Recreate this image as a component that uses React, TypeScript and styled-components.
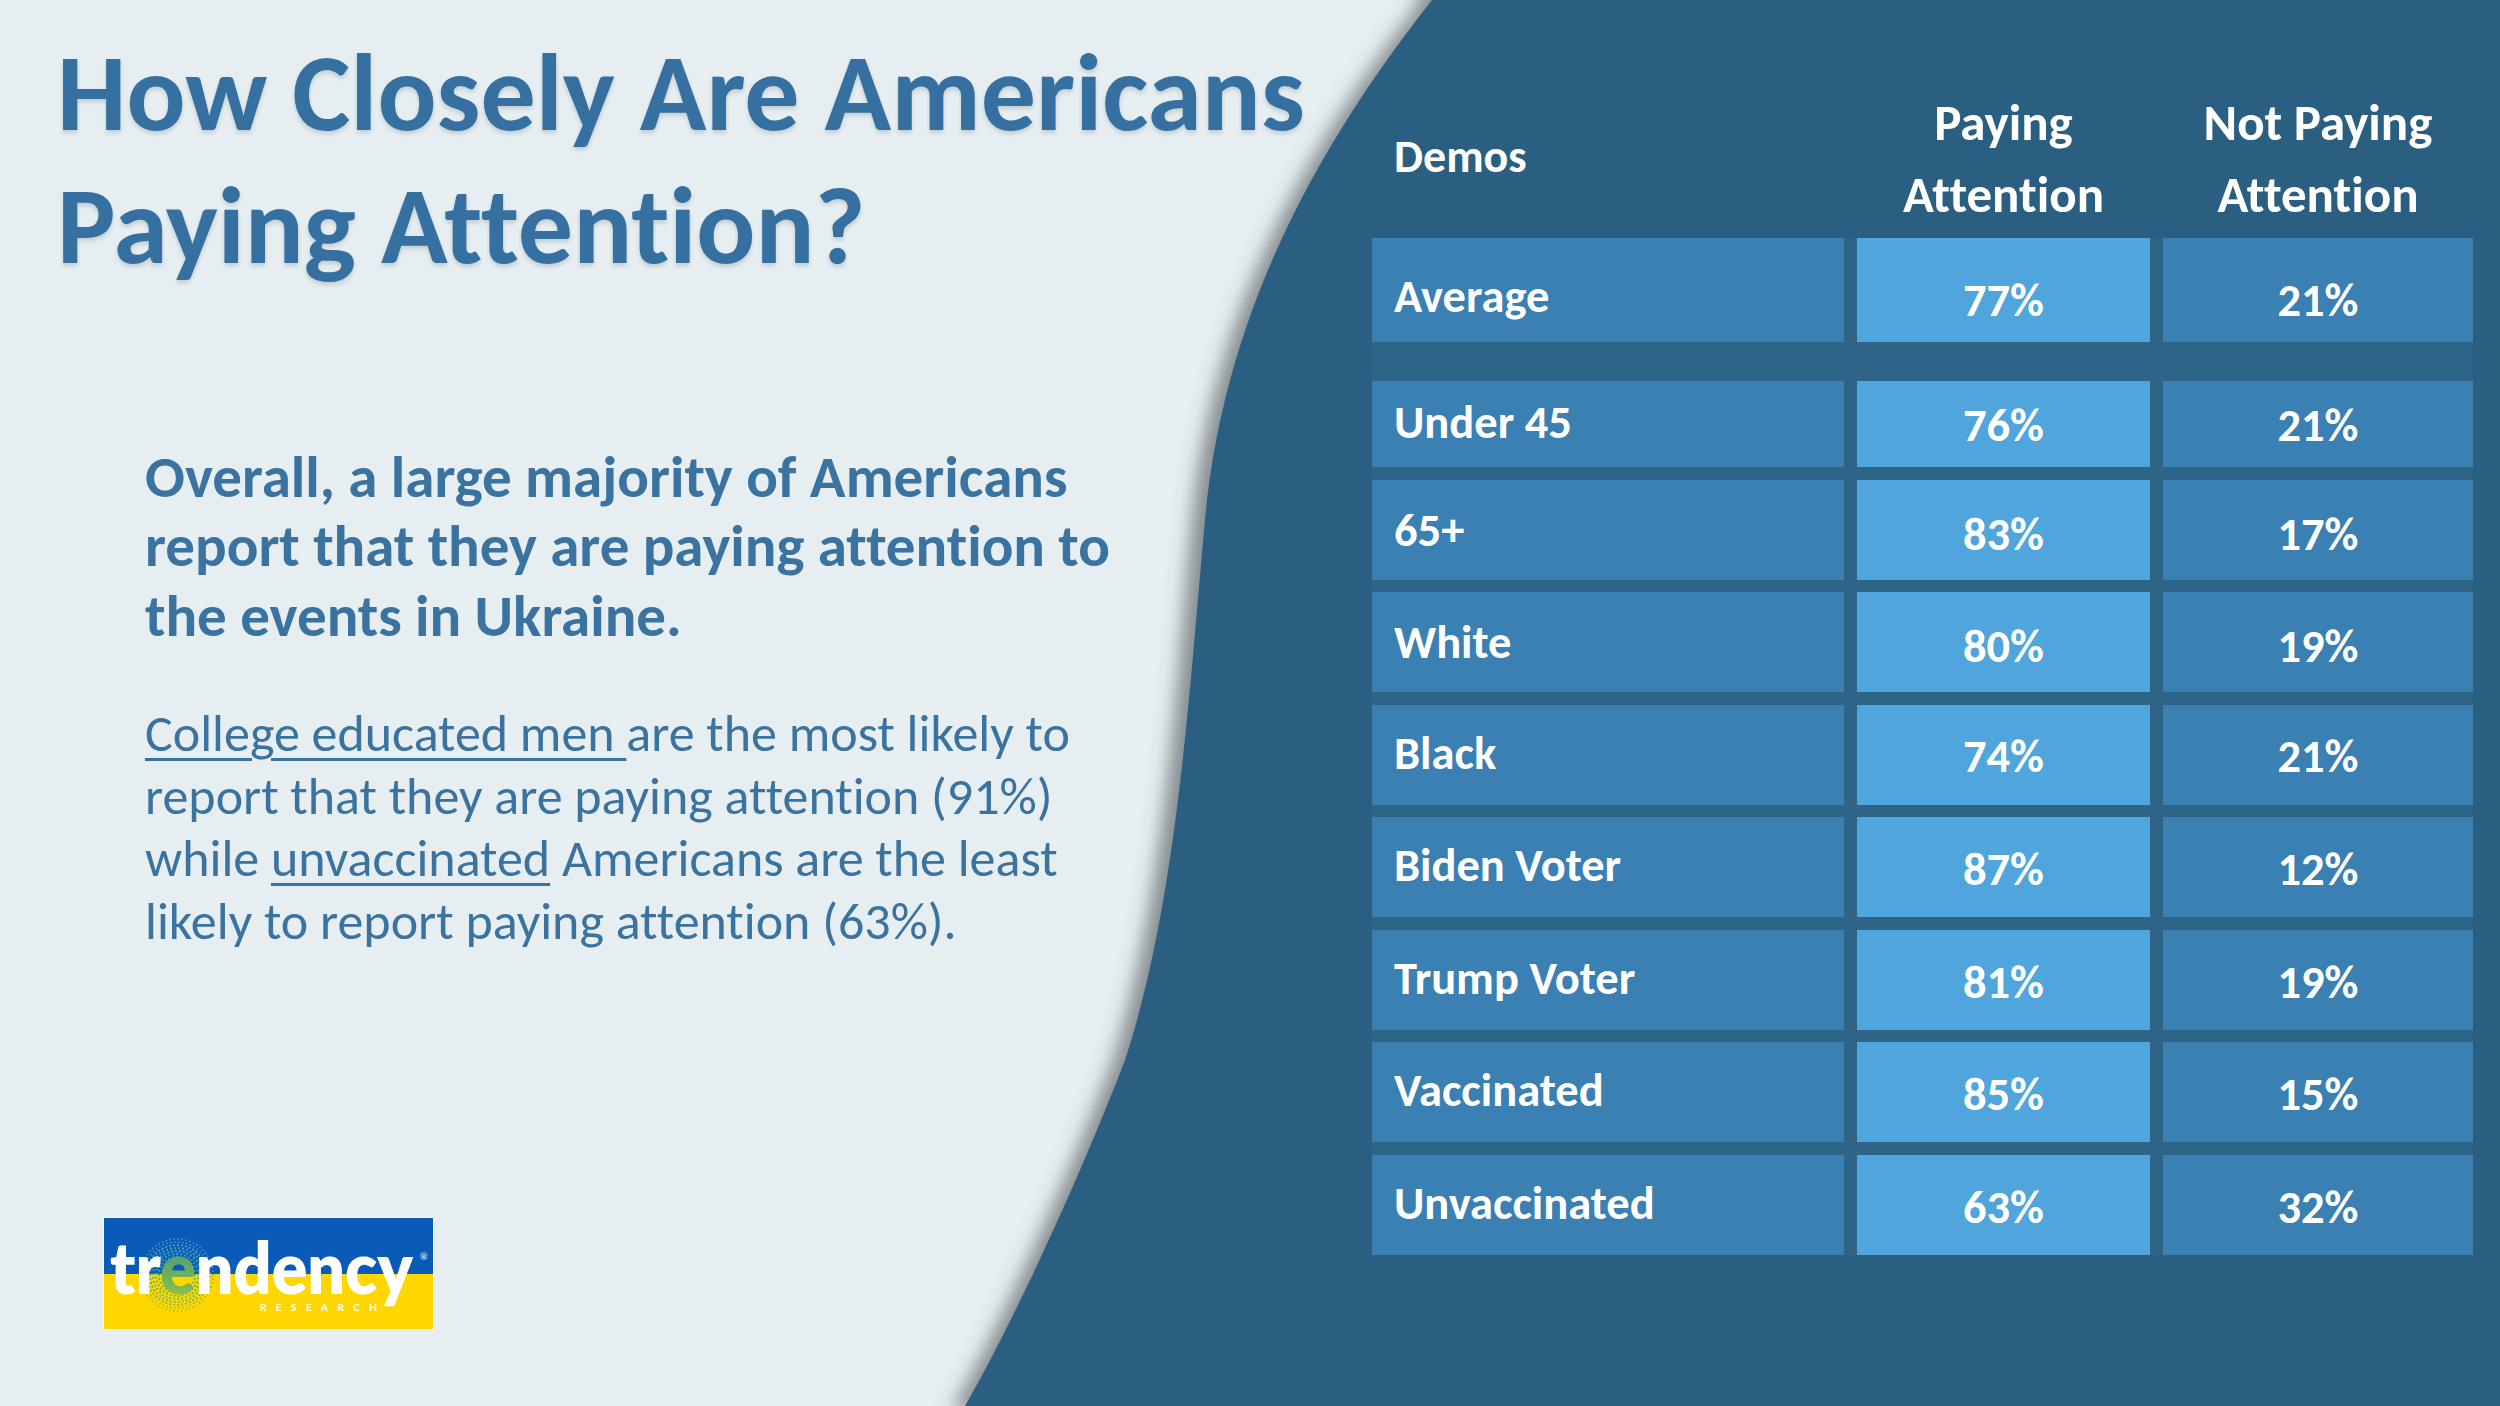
import React from "react";
import styled, { createGlobalStyle } from "styled-components";

const FONT = `"Carlito", "Calibri", "Lato", "Open Sans", sans-serif`;
const LOGO_FONT = `Lato, "Open Sans", sans-serif`;

const Global = createGlobalStyle`
  html, body { margin: 0; padding: 0; background: #e6eef1; }
  body { font-family: ${FONT}; }
`;

const Slide = styled.div`
  position: relative;
  width: 2500px;
  height: 1406px;
  overflow: hidden;
  background: #e6eef1;
  font-family: ${FONT};
  font-variant-ligatures: none;
  font-feature-settings: "liga" 0, "clig" 0;
`;

const Backdrop = styled.svg`
  position: absolute;
  inset: 0;
  width: 100%;
  height: 100%;
  z-index: 0;
`;

const Content = styled.div`
  position: relative;
  z-index: 1;
  display: grid;
  grid-template-columns: 1372px 1101px;
  height: 100%;
`;

const LeftColumn = styled.section`
  display: flex;
  flex-direction: column;
  padding: 26px 0 0 57px;
  min-width: 0;
`;

const Title = styled.h1`
  margin: 0;
  font-size: 110px;
  font-weight: 700;
  line-height: 133.3px;
  color: #3670a0;
  text-shadow: 0 3px 4px rgba(40, 60, 80, 0.18);
  white-space: nowrap;
`;

const Body = styled.div`
  margin: 150px 0 0 88px;
  color: #3a72a0;
  white-space: nowrap;
`;

const Lead = styled.p`
  margin: 0;
  font-size: 59px;
  font-weight: 700;
  line-height: 69.5px;
`;

const Detail = styled.p`
  margin: 51px 0 0;
  font-size: 52px;
  font-weight: 400;
  line-height: 62.5px;
`;

const Underlined = styled.span`
  text-decoration: underline;
  text-decoration-thickness: 3px;
  text-underline-offset: 7px;
`;

const LogoWrap = styled.div`
  margin: auto 0 77px 47px;
  width: 329px;
  height: 111px;
  box-shadow: 0 0 0 1px rgba(255, 255, 255, 0.6);
`;

const LogoSvg = styled.svg`
  display: block;
  overflow: visible;
`;

const RightColumn = styled.section`
  display: flex;
  flex-direction: column;
  padding-top: 60px;
`;

const COLS = "472px 293px 310px";

const HeaderRow = styled.div`
  display: grid;
  grid-template-columns: ${COLS};
  column-gap: 13px;
  height: 178px;
  padding-top: 22px;
  box-sizing: border-box;
`;

const HeadCell = styled.div<{ $align: "left" | "center" }>`
  display: flex;
  align-items: center;
  justify-content: ${(p) => (p.$align === "left" ? "flex-start" : "center")};
  text-align: ${(p) => p.$align};
  padding-left: ${(p) => (p.$align === "left" ? "22px" : "0")};
  padding-bottom: ${(p) => (p.$align === "left" ? "8px" : "2px")};
  font-size: ${(p) => (p.$align === "left" ? "46px" : "51px")};
  font-weight: 700;
  line-height: 72px;
  color: #ffffff;
`;

const BodyGrid = styled.div`
  display: grid;
  grid-template-columns: ${COLS};
  column-gap: 13px;
  row-gap: 12.5px;
  background: #2d6488;
`;

const Spacer = styled.div`
  grid-column: 1 / -1;
  height: 14px;
`;

type Tone = "label" | "bright" | "mid";

const TONES: Record<Tone, string> = {
  label: "#3a80b3",
  bright: "#4fa5dc",
  mid: "#3a80b3",
};

const Cell = styled.div<{ $tone: Tone; $h: number; $shift: number }>`
  display: flex;
  align-items: center;
  justify-content: ${(p) => (p.$tone === "label" ? "flex-start" : "center")};
  height: ${(p) => p.$h}px;
  box-sizing: border-box;
  padding-left: ${(p) => (p.$tone === "label" ? "22px" : "0")};
  padding-top: ${(p) => (p.$tone === "label" ? 0 : 6) + p.$shift}px;
  padding-bottom: ${(p) => (p.$tone === "label" ? 2 : 0)}px;
  background: ${(p) => TONES[p.$tone]};
  font-size: 46.5px;
  font-weight: 700;
  line-height: 1.2;
  color: #ffffff;
`;

const ROWS: { label: string; pay: string; not: string; h: number; shift: number }[] = [
  { label: "Average", pay: "77%", not: "21%", h: 104, shift: 16 },
  { label: "Under 45", pay: "76%", not: "21%", h: 86, shift: -3 },
  { label: "65+", pay: "83%", not: "17%", h: 100, shift: 4 },
  { label: "White", pay: "80%", not: "19%", h: 100, shift: 3 },
  { label: "Black", pay: "74%", not: "21%", h: 100, shift: -1 },
  { label: "Biden Voter", pay: "87%", not: "12%", h: 100, shift: 0 },
  { label: "Trump Voter", pay: "81%", not: "19%", h: 100, shift: 0 },
  { label: "Vaccinated", pay: "85%", not: "15%", h: 100, shift: 0 },
  { label: "Unvaccinated", pay: "63%", not: "32%", h: 100, shift: 0 },
];

function Halo() {
  const dots: React.ReactNode[] = [];
  const cx = 73;
  const cy = 57;
  const rings = [18, 21, 24, 27, 30, 33, 36];
  rings.forEach((r, ri) => {
    const n = Math.round((2 * Math.PI * r) / 4);
    for (let i = 0; i < n; i++) {
      const a = (i / n) * Math.PI * 2 + ri * 0.35;
      dots.push(
        <circle
          key={`${ri}-${i}`}
          cx={cx + r * Math.cos(a)}
          cy={cy + r * Math.sin(a)}
          r={ri > 4 ? 0.85 : 1.15}
        />
      );
    }
  });
  return (
    <g fill="url(#haloGrad)" opacity={0.85}>
      {dots}
    </g>
  );
}

function Logo() {
  return (
    <LogoSvg width="329" height="111" viewBox="0 0 329 111">
      <defs>
        <linearGradient id="haloGrad" x1="0" y1="20" x2="0" y2="95" gradientUnits="userSpaceOnUse">
          <stop offset="0" stopColor="#4fb3c9" />
          <stop offset="0.5" stopColor="#3fa39a" />
          <stop offset="1" stopColor="#7cc04a" />
        </linearGradient>
        <linearGradient id="eGrad" x1="0" y1="0" x2="0" y2="1">
          <stop offset="0" stopColor="#2a8790" />
          <stop offset="1" stopColor="#9acb3c" />
        </linearGradient>
      </defs>
      <rect x="0" y="0" width="329" height="56" fill="#0a5bb8" />
      <rect x="0" y="56" width="329" height="55" fill="#ffd700" />
      <Halo />
      <text
        x="6"
        y="76"
        fontFamily={LOGO_FONT}
        fontWeight="800"
        fontSize="72"
        textLength="303"
        lengthAdjust="spacingAndGlyphs"
        fill="#ffffff"
      >
        tr<tspan fill="url(#eGrad)">e</tspan>ndency
      </text>
      <text
        x="156"
        y="93"
        fontFamily={LOGO_FONT}
        fontWeight="700"
        fontSize="10"
        textLength="117"
        lengthAdjust="spacing"
        fill="#ffffff"
      >
        RESEARCH
      </text>
      <text x="316" y="42" fontFamily={LOGO_FONT} fontSize="9" fill="#ffffff">
        ®
      </text>
    </LogoSvg>
  );
}

export default function App() {
  return (
    <Slide>
      <Global />
      <Backdrop viewBox="0 0 2500 1406" preserveAspectRatio="none">
        <defs>
          <filter id="curveShadow" x="-10%" y="-10%" width="120%" height="120%">
            <feDropShadow dx="-14" dy="5" stdDeviation="9" floodColor="#4a4f52" floodOpacity="0.6" />
          </filter>
        </defs>
        <path
          d="M1432,0 C1330,130 1225,300 1205,520 C1190,680 1178,900 1125,1060 C1085,1165 1015,1320 965,1406 L2520,1406 L2520,-20 L1432,-20 Z"
          fill="#2a5f81"
          filter="url(#curveShadow)"
        />
      </Backdrop>
      <Content>
        <LeftColumn>
          <Title>
            How Closely Are Americans
            <br />
            Paying Attention?
          </Title>
          <Body>
            <Lead>
              Overall, a large majority of Americans
              <br />
              report that they are paying attention to
              <br />
              the events in Ukraine.
            </Lead>
            <Detail>
              <Underlined>College educated men </Underlined>are the most likely to
              <br />
              report that they are paying attention (91%)
              <br />
              while <Underlined>unvaccinated</Underlined> Americans are the least
              <br />
              likely to report paying attention (63%).
            </Detail>
          </Body>
          <LogoWrap>
            <Logo />
          </LogoWrap>
        </LeftColumn>
        <RightColumn>
          <HeaderRow>
            <HeadCell $align="left">Demos</HeadCell>
            <HeadCell $align="center">
              Paying
              <br />
              Attention
            </HeadCell>
            <HeadCell $align="center">
              Not Paying
              <br />
              Attention
            </HeadCell>
          </HeaderRow>
          <BodyGrid>
            {ROWS.map((r, i) => (
              <React.Fragment key={r.label}>
                <Cell $tone="label" $h={r.h} $shift={r.shift}>
                  {r.label}
                </Cell>
                <Cell $tone="bright" $h={r.h} $shift={r.shift}>
                  {r.pay}
                </Cell>
                <Cell $tone="mid" $h={r.h} $shift={r.shift}>
                  {r.not}
                </Cell>
                {i === 0 && <Spacer />}
              </React.Fragment>
            ))}
          </BodyGrid>
        </RightColumn>
      </Content>
    </Slide>
  );
}
